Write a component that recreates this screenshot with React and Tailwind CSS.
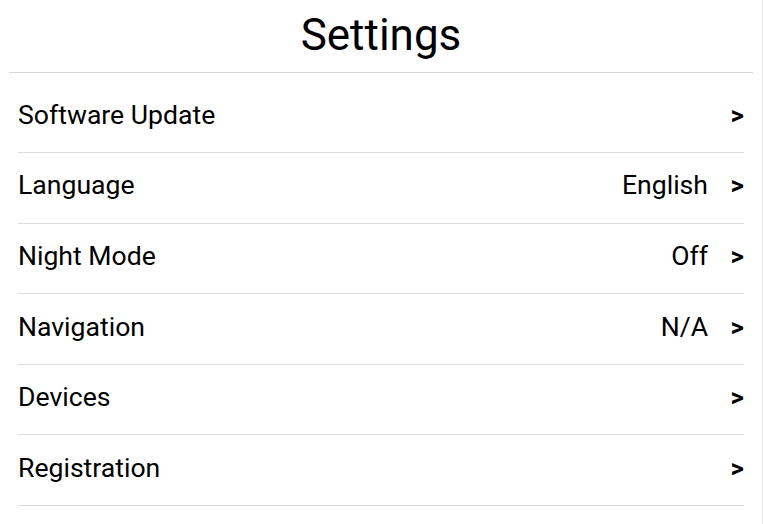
const rows = [
  { label: "Software Update" },
  { label: "Language", value: "English" },
  { label: "Night Mode", value: "Off" },
  { label: "Navigation", value: "N/A" },
  { label: "Devices" },
  { label: "Registration" },
];

function SettingsRow({ label, value }) {
  return (
    <div className="mx-[18px] flex h-[70.6px] items-baseline border-b border-[#dcdcdc] pt-[16.5px] leading-[32px]">
      <span className="flex-1 text-[26.6px] text-black">{label}</span>
      {value && <span className="pr-[20px] text-[26.6px] text-black">{value}</span>}
      <span className="w-[16px] text-right text-[26px] font-bold text-black">&gt;</span>
    </div>
  );
}

export default function App() {
  return (
    <div
      className="h-[524px] w-[763px] border-r border-[#ebebeb] bg-white"
      style={{ fontFamily: "Roboto, 'Liberation Sans', sans-serif" }}
    >
      <h1 className="pt-[9px] text-center text-[44px] leading-[52px] font-normal text-black">Settings</h1>
      <div className="mx-[9px] mt-[11px] border-b border-[#d6d6d6]" />
      <div className="pt-[9.4px]">
        {rows.map((row) => (
          <SettingsRow key={row.label} {...row} />
        ))}
      </div>
    </div>
  );
}
